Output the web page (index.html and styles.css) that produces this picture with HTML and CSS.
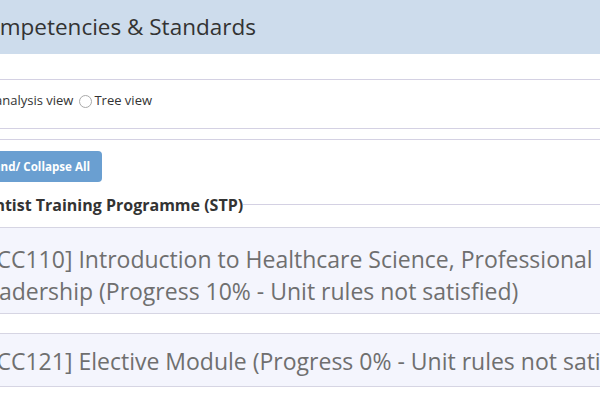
FILE: index.html
```html
<!DOCTYPE html>
<html lang="en">
<head>
<meta charset="utf-8">
<title>Competencies &amp; Standards</title>
<link rel="stylesheet" href="styles.css">
</head>
<body>
<div class="page">
  <header class="page-header">
    <h1 class="page-title">Competencies &amp; Standards</h1>
  </header>

  <div class="view-panel">
    <label class="radio"><span class="radio-circle"></span>Gap analysis view</label>
    <label class="radio"><span class="radio-circle"></span>Tree view</label>
  </div>

  <div class="tree-panel">
    <button class="btn-toggle" type="button">Expand/ Collapse All</button>

    <div class="legend-row">
      <span class="legend-text">Scientist Training Programme (STP)</span>
      <span class="legend-line"></span>
    </div>

    <div class="unit unit-first">
      <div class="unit-title"><span class="unit-icon"></span> [CC110] Introduction to Healthcare Science, Professional Practice and Leadership (Progress 10% - Unit rules not satisfied)</div>
    </div>

    <div class="unit">
      <div class="unit-title"><span class="unit-icon"></span> [CC121] Elective Module (Progress 0% - Unit rules not satisfied)</div>
    </div>
  </div>
</div>
</body>
</html>
```

FILE: styles.css
```css
html, body {
  margin: 0;
  padding: 0;
  background: #ffffff;
  overflow: hidden;
}

body {
  font-family: "Open Sans", "DejaVu Sans", sans-serif;
  color: #333333;
  width: 600px;
  height: 400px;
}

.page {
  margin-left: -50px;
  width: 850px;
}

.page-header {
  background: #cddcec;
  height: 54px;
  display: flex;
  align-items: center;
  padding-left: 22px;
}

.page-title {
  margin: 0;
  font-size: 22.5px;
  font-weight: 400;
  color: #333333;
  line-height: 30px;
  padding-bottom: 1px;
}

.view-panel {
  margin-top: 25px;
  border-top: 1px solid #d4d1e3;
  border-bottom: 1px solid #d4d1e3;
  display: flex;
  align-items: center;
  padding-left: 2px;
  padding-bottom: 8px;
  box-sizing: border-box;
  height: 50px;
  font-size: 13px;
  color: #333333;
}

.radio {
  display: inline-flex;
  align-items: center;
  margin-right: 6px;
}

.radio-circle {
  width: 11px;
  height: 11px;
  border: 1px solid #a9a9a9;
  border-radius: 50%;
  margin-right: 2px;
  margin-top: 3px;
  background: #fff;
}

.tree-panel {
  margin-top: 10px;
  border-top: 1px solid #d4d1e3;
  padding-top: 11px;
  padding-left: 11px;
}

.btn-toggle {
  display: block;
  height: 31px;
  padding: 0 12px;
  border: none;
  border-radius: 4px;
  background: #6a9fd1;
  color: #ffffff;
  font-family: "Open Sans", "DejaVu Sans", sans-serif;
  font-size: 11.6px;
  font-weight: 700;
}

.legend-row {
  display: flex;
  align-items: center;
  height: 22px;
  margin-top: 12px;
  margin-left: 2px;
}

.legend-text {
  font-size: 16px;
  font-weight: 700;
  color: #333333;
  white-space: nowrap;
}

.legend-line {
  flex: 1;
  border-top: 1px solid #d4d1e3;
  margin-bottom: 2px;
}

.unit {
  margin-top: 19px;
  background: #f4f5fd;
  border-top: 1px solid #d6d5e3;
  border-bottom: 1px solid #d6d5e3;
  padding: 11px 0 9px 13px;
  margin-left: -11px;
}

.unit-first {
  margin-top: 11px;
  padding-top: 15px;
  padding-bottom: 6px;
}

.unit-title {
  font-size: 23px;
  line-height: 32px;
  color: #6f6f6f;
  width: 790px;
  padding-left: 11px;
}

.unit-icon {
  display: inline-block;
  width: 9px;
}
```
